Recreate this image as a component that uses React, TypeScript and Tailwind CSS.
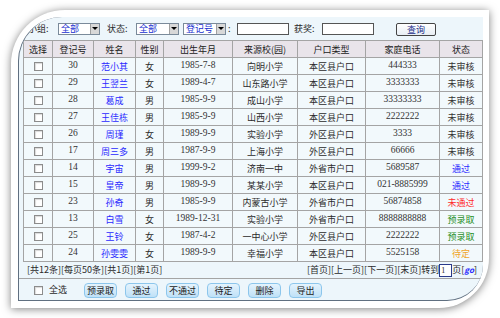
import React from "react";

type Row = {
  id: number;
  name: string;
  sex: string;
  birth: string;
  school: string;
  hukou: string;
  phone: string;
  status: string;
};

const rows: Row[] = [
  { id: 30, name: "范小其", sex: "女", birth: "1985-7-8", school: "向明小学", hukou: "本区县户口", phone: "444333", status: "未审核" },
  { id: 29, name: "王翌兰", sex: "女", birth: "1989-4-7", school: "山东路小学", hukou: "本区县户口", phone: "3333333", status: "未审核" },
  { id: 28, name: "葛成", sex: "男", birth: "1985-9-9", school: "成山小学", hukou: "本区县户口", phone: "33333333", status: "未审核" },
  { id: 27, name: "王佳栋", sex: "男", birth: "1985-9-9", school: "山西小学", hukou: "本区县户口", phone: "2222222", status: "未审核" },
  { id: 26, name: "周瑾", sex: "女", birth: "1989-9-9", school: "实验小学", hukou: "外区县户口", phone: "3333", status: "未审核" },
  { id: 17, name: "周三多", sex: "男", birth: "1987-9-9", school: "上海小学", hukou: "外区县户口", phone: "66666", status: "未审核" },
  { id: 14, name: "宇宙", sex: "男", birth: "1999-9-2", school: "济南一中", hukou: "外省市户口", phone: "5689587", status: "通过" },
  { id: 15, name: "皇帝", sex: "男", birth: "1989-9-9", school: "某某小学", hukou: "本区县户口", phone: "021-8885999", status: "通过" },
  { id: 23, name: "孙奇", sex: "男", birth: "1985-9-9", school: "内蒙古小学", hukou: "外省市户口", phone: "56874858", status: "未通过" },
  { id: 13, name: "白雪", sex: "女", birth: "1989-12-31", school: "实验小学", hukou: "外省市户口", phone: "8888888888", status: "预录取" },
  { id: 25, name: "王铃", sex: "女", birth: "1987-4-2", school: "一中心小学", hukou: "外区县户口", phone: "2222222", status: "预录取" },
  { id: 24, name: "孙雯雯", sex: "女", birth: "1989-9-9", school: "幸福小学", hukou: "本区县户口", phone: "5525158", status: "待定" },
];

const statusColor: Record<string, string> = {
  未审核: "text-[#333333]",
  通过: "text-[#2a2aff]",
  未通过: "text-[#ff2a2a]",
  预录取: "text-[#1f8f1f]",
  待定: "text-[#f0a428]",
};

const headers = ["选择", "登记号", "姓名", "性别", "出生年月", "来源校(园)", "户口类型", "家庭电话", "状态"];
const widths = [29, 41, 42, 28, 69, 65, 68, 74, 43];

const cell = "border border-[#a4a4a4] p-0 leading-none";
const num = "font-['Liberation_Serif'] text-[9.5px] text-[#333]";

function Checkbox() {
  return <span className="inline-block w-[9px] h-[9px] bg-white border border-[#8c8c8c] shadow-[inset_1px_1px_1px_rgba(0,0,0,0.15)] align-middle" />;
}

function Select({ text, w }: { text: string; w: string }) {
  return (
    <div className={`${w} h-[12px] flex items-center bg-white border border-[#7a8a9a]`}>
      <span className="flex-1 pl-[2px] text-[#2030d0] leading-none">{text}</span>
      <span className="w-[9px] h-[10px] bg-[#d8d8d8] border-l border-[#a0a0a0] flex items-center justify-center">
        <span className="w-0 h-0 border-l-[3px] border-r-[3px] border-t-[3px] border-l-transparent border-r-transparent border-t-black" />
      </span>
    </div>
  );
}

function Btn({ label }: { label: string }) {
  return (
    <button className="w-[33px] h-[15px] rounded-[4px] border border-[#8cc6ec] bg-gradient-to-b from-[#e4f3fd] to-[#bfe1f7] text-[#222] text-[9px] leading-none">
      {label}
    </button>
  );
}

export default function App() {
  return (
    <div
      className="w-[500px] h-[318px] bg-white pt-[10px] pl-[11px] overflow-hidden"
      style={{ fontFamily: '"Noto Sans CJK SC", "Noto Sans", sans-serif' }}
    >
      <div className="w-[478px] h-[298px] bg-white rounded-tl-[54px] rounded-br-[50px] shadow-[0_1px_9px_rgba(0,0,0,0.5)] pt-[7px] pl-[7px]">
        <div className="w-[465px] h-[284px] rounded-tl-[44px] rounded-br-[36px] overflow-hidden border-l border-b border-[#5f6f80] bg-[#edf6fb] text-[9px] text-[#2a2a2a]">
          {/* filter bar */}
          <div className="h-[23px] flex items-center">
            <span className="ml-[9px] w-[30px]">小组:</span>
            <Select text="全部" w="w-[42px]" />
            <span className="ml-[7px] w-[29px]">状态:</span>
            <Select text="全部" w="w-[43px]" />
            <div className="ml-[4px]">
              <Select text="登记号" w="w-[43px]" />
            </div>
            <span className="ml-[2px] w-[9px]">:</span>
            <div className="w-[52px] h-[12px] bg-white border border-[#555]" />
            <span className="ml-[5px] w-[28px]">获奖:</span>
            <div className="w-[52px] h-[12px] bg-white border border-[#555]" />
            <button className="ml-[22px] mt-[2px] w-[40px] h-[13px] rounded-[2px] border border-[#444] bg-gradient-to-b from-white to-[#e8eef4] text-[#1c2f8a] text-[9px] leading-none">
              查询
            </button>
          </div>

          {/* grid */}
          <div className="pl-[4px]">
            <table className="table-fixed border-collapse w-[459px]">
              <colgroup>
                {widths.map((w, i) => (
                  <col key={i} style={{ width: w }} />
                ))}
              </colgroup>
              <thead>
                <tr className="h-[17px] bg-[#e9e4ea]">
                  {headers.map((h) => (
                    <th key={h} className={`${cell} font-normal text-[#222]`}>
                      {h}
                    </th>
                  ))}
                </tr>
              </thead>
              <tbody>
                {rows.map((r) => (
                  <tr key={r.id} className="h-[17px] bg-[#f2f9fc] text-center">
                    <td className={cell}>
                      <Checkbox />
                    </td>
                    <td className={`${cell} ${num}`}>{r.id}</td>
                    <td className={`${cell} text-[#2a2aff]`}>{r.name}</td>
                    <td className={cell}>{r.sex}</td>
                    <td className={`${cell} ${num}`}>{r.birth}</td>
                    <td className={cell}>{r.school}</td>
                    <td className={cell}>{r.hukou}</td>
                    <td className={`${cell} ${num}`}>{r.phone}</td>
                    <td className={`${cell} ${statusColor[r.status]}`}>{r.status}</td>
                  </tr>
                ))}
              </tbody>
            </table>
          </div>

          {/* paging */}
          <div className="h-[17px] flex items-center justify-between pl-[8px] pr-[6px] border-b border-[#a4a4a4]">
            <span>[共12条][每页50条][共1页][第1页]</span>
            <div className="flex items-center">
              <span>[首页][上一页][下一页][末页]转到</span>
              <span className="w-[13px] h-[13px] bg-white border border-[#2a3a8a] text-[8px] leading-[11px] pl-[1px] font-['Liberation_Serif']">1</span>
              <span>页[</span>
              <span className="text-[#2a2aff] italic font-bold text-[8px]">go</span>
              <span>]</span>
            </div>
          </div>

          {/* actions */}
          <div className="h-[22px] flex items-center pl-[15px] gap-[8px]">
            <Checkbox />
            <span className="ml-[-2px] mr-[9px]">全选</span>
            <Btn label="预录取" />
            <Btn label="通过" />
            <Btn label="不通过" />
            <Btn label="待定" />
            <Btn label="删除" />
            <Btn label="导出" />
          </div>
        </div>
      </div>
    </div>
  );
}
